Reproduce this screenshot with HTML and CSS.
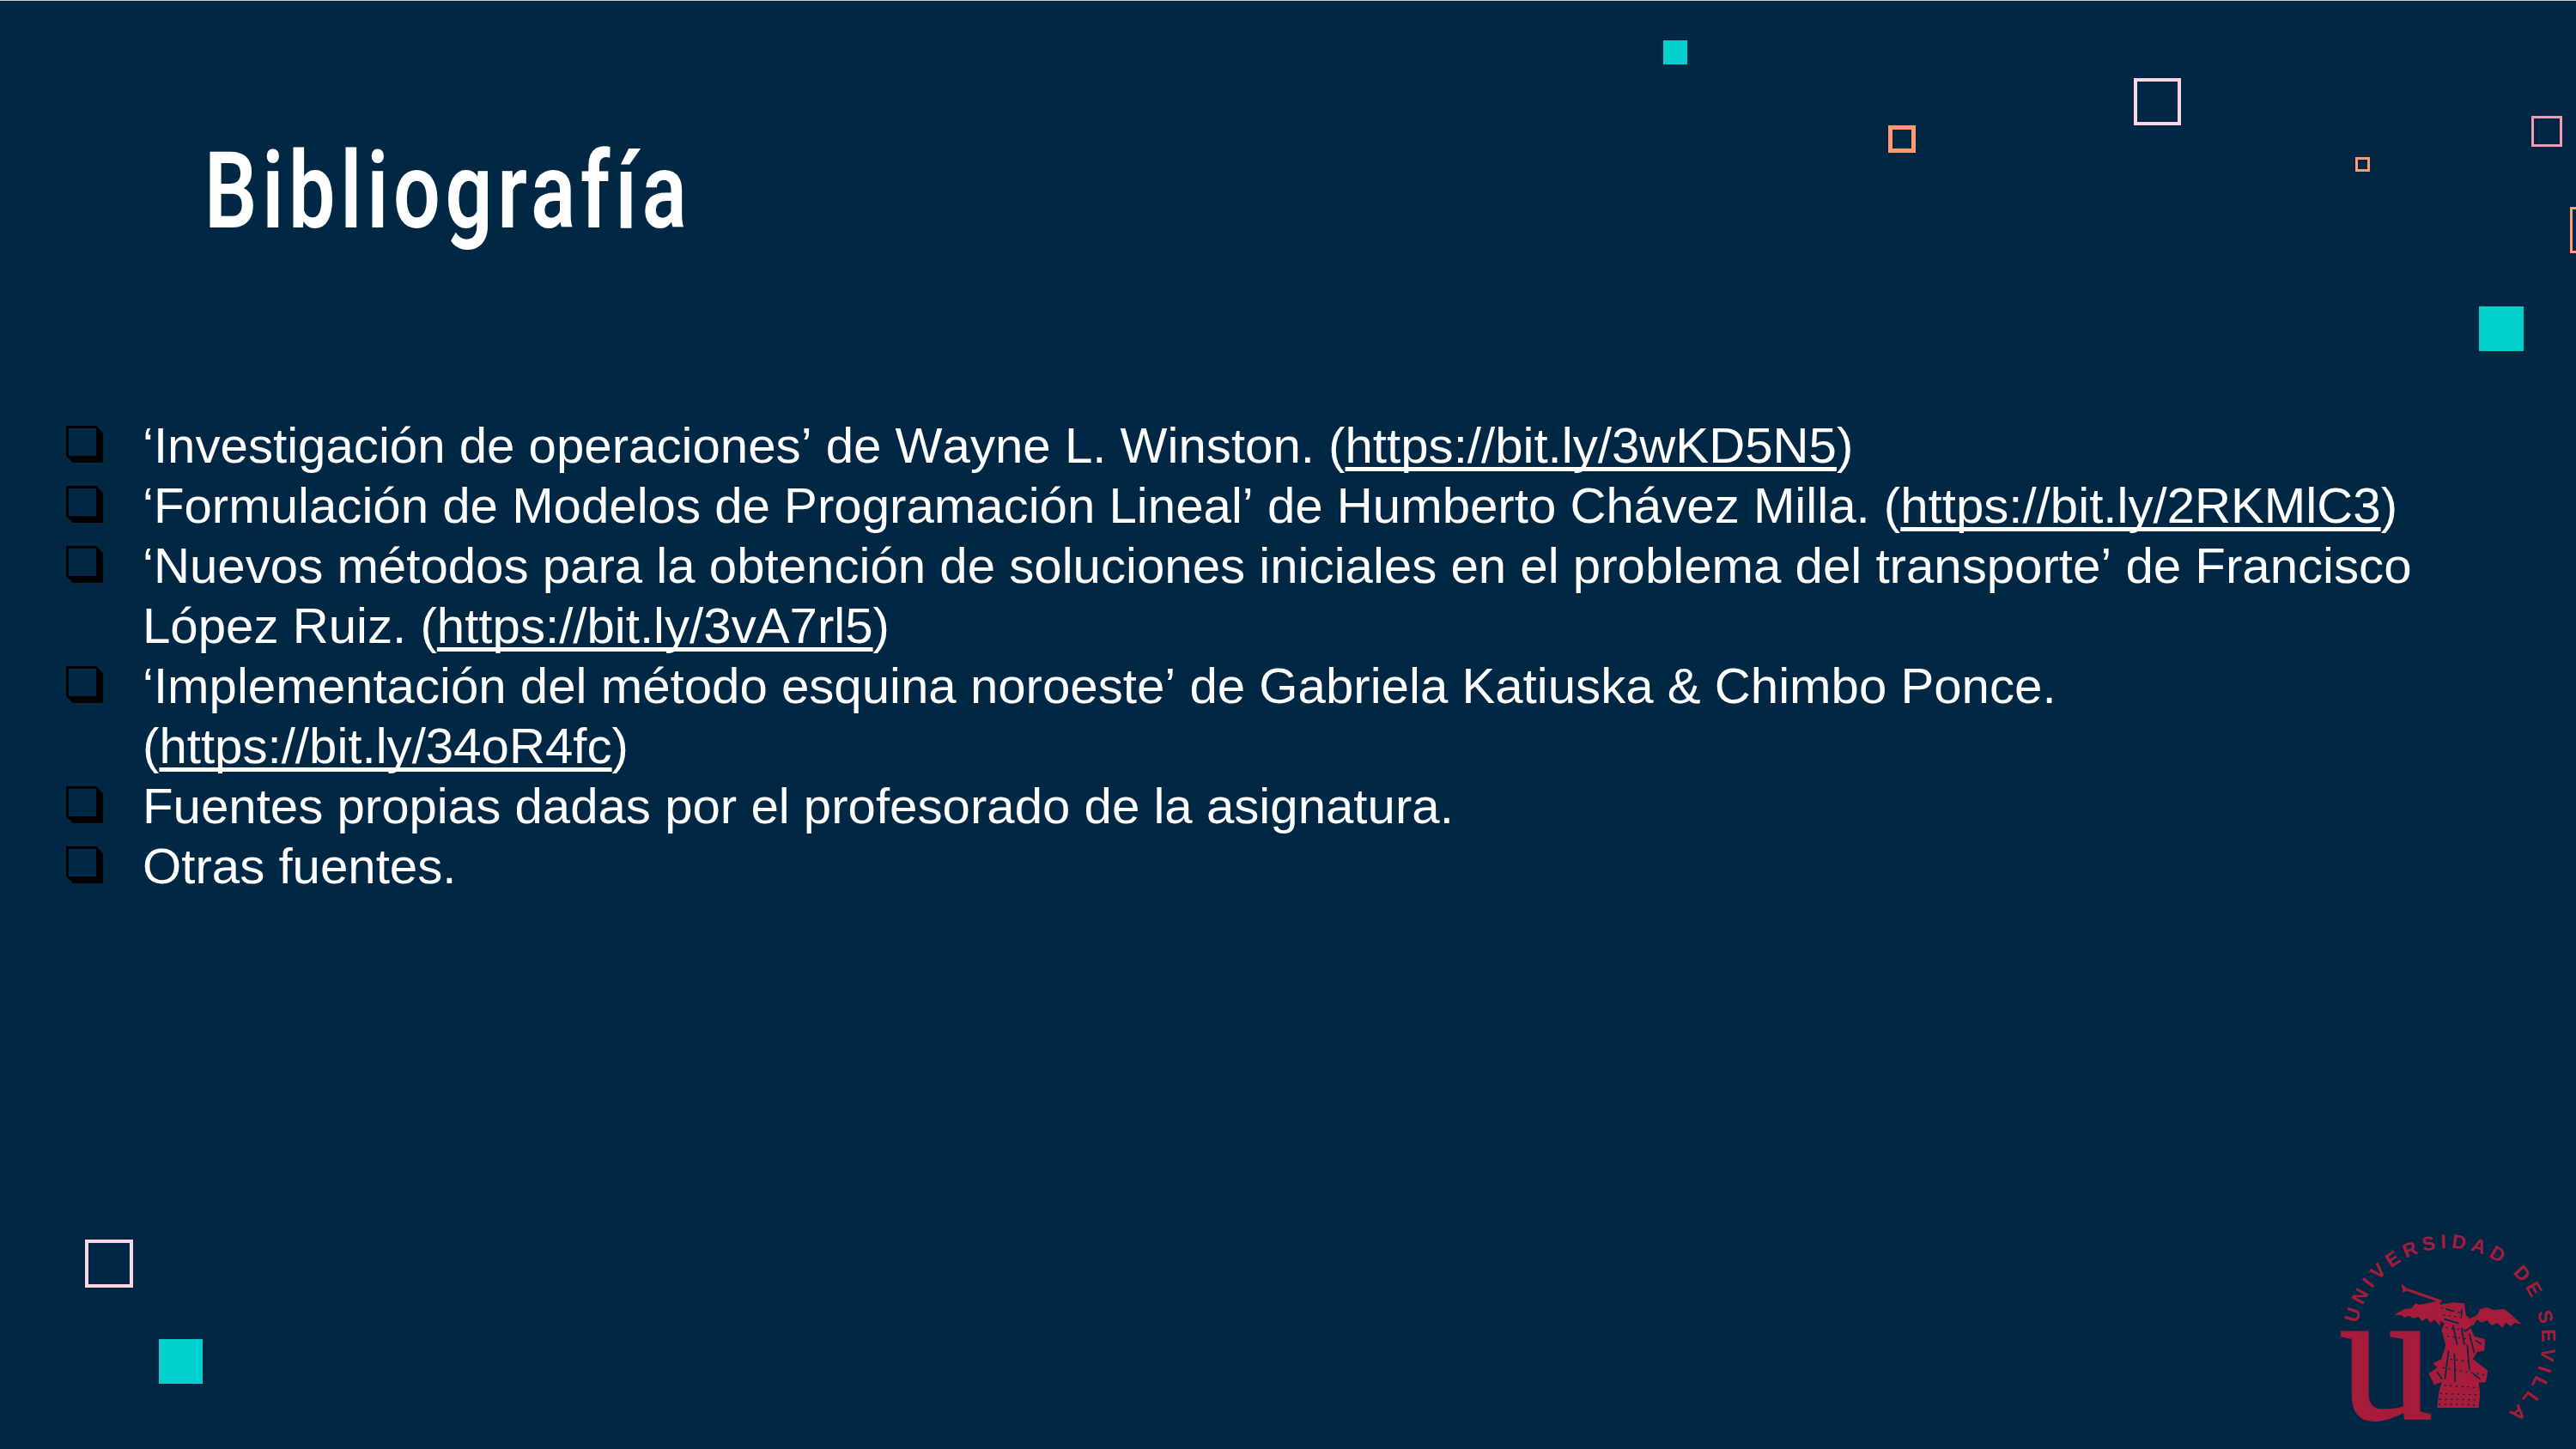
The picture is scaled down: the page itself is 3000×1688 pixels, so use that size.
FILE: index.html
```html
<!DOCTYPE html>
<html lang="es">

<head>
    <meta charset="UTF-8">
    <title>Bibliografía</title>
    <link rel="stylesheet" href="styles.css">
</head>

<body>
    <div id="slide">
        <h1 class="title">Bibliografía</h1>

        <ul class="refs">
            <li><span>‘Investigación de operaciones’ de Wayne L. Winston. (<a href="#">https://bit.ly/3wKD5N5</a>)</span></li>
            <li><span>‘Formulación de Modelos de Programación Lineal’ de Humberto Chávez Milla. (<a href="#">https://bit.ly/2RKMlC3</a>)</span></li>
            <li><span>‘Nuevos métodos para la obtención de soluciones iniciales en el problema del transporte’ de Francisco López Ruiz. (<a href="#">https://bit.ly/3vA7rl5</a>)</span></li>
            <li><span>‘Implementación del método esquina noroeste’ de Gabriela Katiuska &amp; Chimbo Ponce. (<a href="#">https://bit.ly/34oR4fc</a>)</span></li>
            <li><span>Fuentes propias dadas por el profesorado de la asignatura.</span></li>
            <li><span>Otras fuentes.</span></li>
        </ul>

        <!-- decoration -->
        <div class="sq teal s1"></div>
        <div class="sq orange s2"></div>
        <div class="sq blush s3"></div>
        <div class="sq orange s4"></div>
        <div class="sq pink s5"></div>
        <div class="sq orange s6"></div>
        <div class="sq teal s7"></div>
        <div class="sq blush s8"></div>
        <div class="sq teal s9"></div>

        <svg class="logo" viewBox="0 0 900 834" role="img" aria-label="Universidad de Sevilla">
            <defs>
                <path id="ring" d="M136 396 A325 325 0 1 1 617 739"></path>
            </defs>
            <text class="logo-ring"><textPath href="#ring">UNIVERSIDAD DE SEVILLA</textPath></text>
            <text class="logo-u" x="72" y="730">u</text>
            <!-- trumpet -->
            <path d="M290 255 L306 271 L432 314 L428 323 L308 281 L295 288 Z"></path>
            <!-- wings -->
            <path d="M265 365 L300 345 L325 342 L340 325 L352 330 L380 325 L425 316 L425 405 L405 382 L392 394 L378 376 L362 388 L350 372 L330 378 L318 368 L300 374 L290 366 Z"></path>
            <path d="M530 378 L555 365 L565 345 L590 340 L610 348 L650 345 L680 370 L710 398 L685 393 L672 405 L655 392 L642 410 L625 393 L605 402 L590 384 L570 392 L555 382 L540 402 Z"></path>
            <!-- figure -->
            <path d="M420 330 L470 322 L510 325 L515 365 L530 380 L545 400 L532 412 L545 440 L582 450 L580 490 L555 495 L540 520 L592 560 L585 600 L560 602 L565 640 L560 690 L415 690 L420 640 L430 600 L405 610 L385 570 L415 550 L400 535 L430 520 L445 470 L430 420 L440 395 L415 380 Z"></path>
            <!-- figure details -->
            <path class="logo-cut" d="M445 345 L470 352 M440 380 L490 395 M470 400 L485 470 M500 410 L510 470 M455 490 L442 590 M475 500 L478 600 M520 470 L528 560 M510 425 L540 402 M550 455 L570 468 M415 565 L432 590 M540 570 L565 590 M500 345 L500 370 M527 430 L545 500"></path>
            <path class="logo-speck" d="M430 340 L505 360 M435 365 L505 375 M445 410 L525 420 M450 440 L530 450 M460 520 L540 530 M435 550 L580 575 M420 610 L560 620 M425 640 L555 645 M422 660 L555 662 M420 678 L555 680"></path>
        </svg>
    </div>
</body>

</html>
```

FILE: styles.css
```css
html,
body {
    margin: 0;
    padding: 0;
}

#slide {
    position: relative;
    width: 3000px;
    height: 1688px;
    overflow: hidden;
    box-sizing: border-box;
    background: #002845;
    border-top: 1px solid #c8d0d6;
    font-family: "Liberation Sans", Arial, sans-serif;
    color: #fff;
}

.title {
    margin: 0;
    padding: 157px 0 0 238px;
    height: 298px;
    box-sizing: border-box;
    font-family: "Roboto", sans-serif;
    font-weight: 600;
    font-size: 124px;
    line-height: 130px;
    letter-spacing: 7.4px;
    transform: scaleX(.78);
    transform-origin: 238px 0;
}

.refs {
    list-style: none;
    margin: 0;
    padding: 185px 120px 0 77px;
    font-size: 58.2px;
    font-kerning: none;
    line-height: 70px;
}

.refs li {
    display: flex;
    gap: 46px;
}

.refs li::before {
    content: "";
    flex: none;
    box-sizing: border-box;
    width: 43px;
    height: 43px;
    margin-top: 12px;
    border: solid #000;
    border-width: 3px 8px 8px 3px;
    clip-path: polygon(0 0, 35px 0, 43px 8px, 43px 43px, 8px 43px, 0 35px);
}

.refs a {
    color: #fff;
    text-decoration: underline;
    text-decoration-thickness: 5px;
    text-underline-offset: 5px;
    text-decoration-skip-ink: none;
}

.sq {
    position: absolute;
    box-sizing: border-box;
}

.teal {
    background: #00d1cc;
}

.orange {
    border: 4px solid #ff9b73;
}

.blush {
    border: 4px solid #ffd5e3;
}

.pink {
    border: 3px solid #ee9cb8;
}

.s1 { left: 1937px; top: 46px; width: 28px; height: 28px; }
.s2 { left: 2199px; top: 145px; width: 32px; height: 32px; border-width: 5px; }
.s3 { left: 2485px; top: 90px; width: 55px; height: 55px; }
.s4 { left: 2743px; top: 182px; width: 17px; height: 17px; border-width: 3px; }
.s5 { left: 2948px; top: 134px; width: 36px; height: 36px; }
.s6 { left: 2993px; top: 240px; width: 54px; height: 54px; border-width: 3px; }
.s7 { left: 2887px; top: 356px; width: 52px; height: 52px; }
.s8 { left: 99px; top: 1443px; width: 56px; height: 56px; }
.s9 { left: 185px; top: 1559px; width: 51px; height: 52px; }

.logo {
    position: absolute;
    left: 2700px;
    top: 1409px;
    width: 300px;
    height: 278px;
    fill: #a71c3b;
}

.logo-ring {
    font-family: "Liberation Sans", sans-serif;
    font-weight: 700;
    font-size: 68px;
    letter-spacing: 17px;
}

.logo-u {
    font-family: "Liberation Serif", serif;
    font-size: 660px;
    stroke: #a71c3b;
    stroke-width: 6;
}

.logo-cut {
    fill: none;
    stroke: #002845;
    stroke-width: 5;
}

.logo-speck {
    fill: none;
    stroke: #002845;
    stroke-width: 4;
    stroke-dasharray: 7 13;
}
```
